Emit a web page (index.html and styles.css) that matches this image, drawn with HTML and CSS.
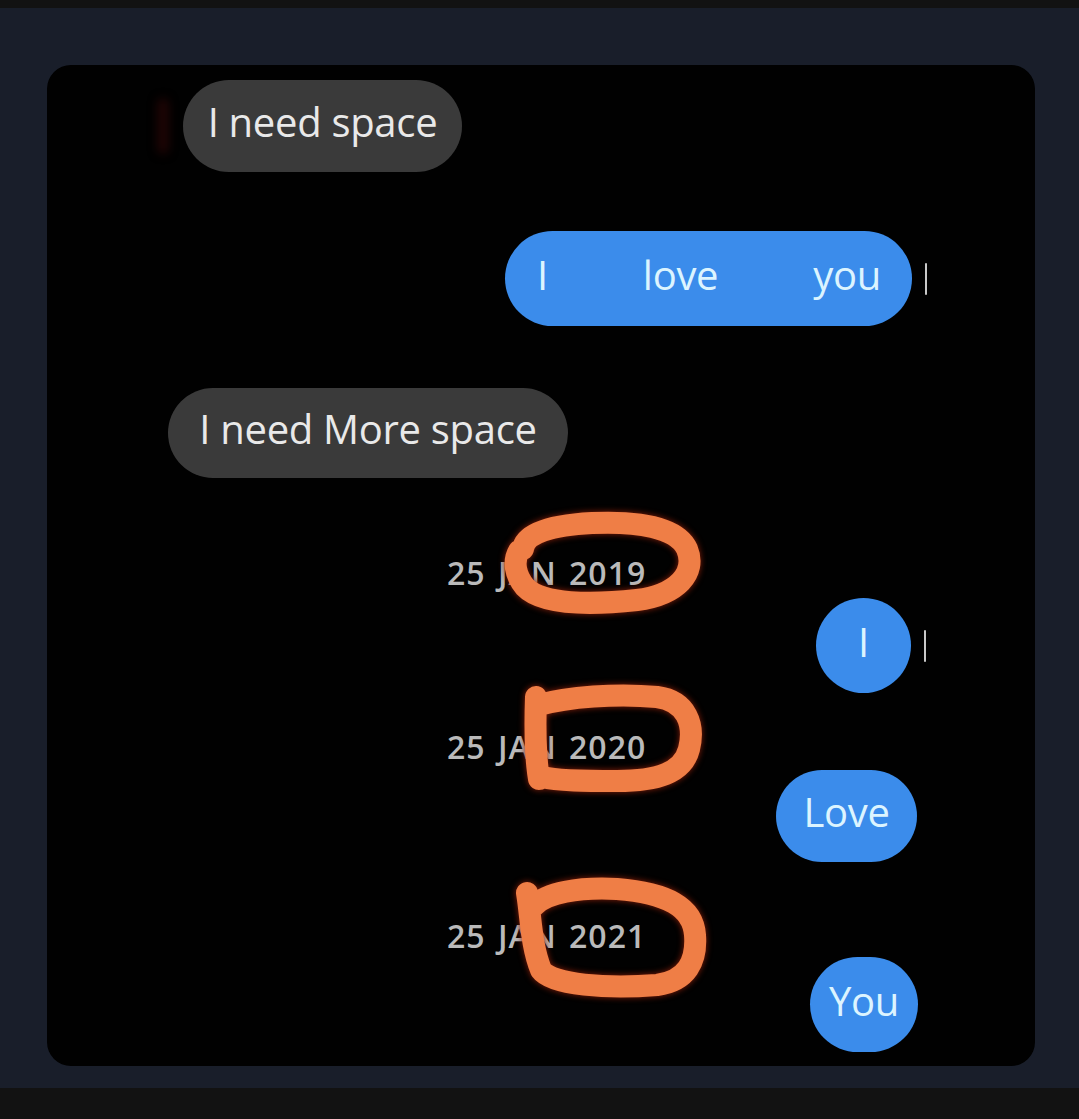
FILE: index.html
```html
<!DOCTYPE html>
<html lang="en">
<head>
<meta charset="utf-8">
<title>I need space</title>
<link rel="stylesheet" href="styles.css">
</head>
<body>
<div class="strip strip-top"></div>
<main class="stage">
  <section class="card">
    <div class="row row-left row-1">
      <span class="ghost"></span>
      <div class="bubble gray">I need space</div>
    </div>
    <div class="row row-right row-2">
      <div class="bubble blue wide"><span>I</span><span>love</span><span>you</span></div>
      <span class="caret"></span>
    </div>
    <div class="row row-left row-3">
      <div class="bubble gray">I need More space</div>
    </div>
    <div class="date date-1">25 JAN 2019</div>
    <div class="row row-right row-4">
      <div class="bubble blue round">I</div>
      <span class="caret"></span>
    </div>
    <div class="date date-2">25 JAN 2020</div>
    <div class="row row-right row-5">
      <div class="bubble blue love">Love</div>
    </div>
    <div class="date date-3">25 JAN 2021</div>
    <div class="row row-right row-6">
      <div class="bubble blue you">You</div>
    </div>
    <svg class="marks" viewBox="0 0 988 1001" aria-hidden="true">
      <g fill="none" stroke="#ef7e46" stroke-width="22" stroke-linecap="round" stroke-linejoin="round">
        <path d="M476,484 C478,468 505,460 545,458 C590,456 630,462 640,484 C650,508 630,530 590,535 C545,540 495,540 478,522 C468,510 466,496 472,486"/>
        <path d="M489,632 C488,660 488,690 492,714 M492,640 C520,632 570,628 610,632 C640,636 648,660 642,684 C636,708 610,716 570,716 C540,716 510,716 496,712"/>
        <path d="M480,828 C484,852 484,880 494,905 C505,920 560,924 610,920 C640,916 650,896 648,870 C646,842 620,828 570,824 C530,822 500,828 488,840"/>
      </g>
    </svg>
  </section>
</main>
<div class="strip strip-bottom"></div>
</body>
</html>
```
FILE: styles.css
```css
html, body {
  margin: 0;
  padding: 0;
}
body {
  width: 1079px;
  height: 1119px;
  overflow: hidden;
  background: #191e2a;
  font-family: "Open Sans", "Noto Sans", "DejaVu Sans", sans-serif;
}
.strip {
  background: #121212;
}
.strip-top {
  height: 8px;
}
.strip-bottom {
  height: 31px;
}
.stage {
  padding: 57px 44px 22px 47px;
}
.card {
  position: relative;
  width: 988px;
  height: 1001px;
  box-sizing: border-box;
  background: #010101;
  border-radius: 24px;
  padding-top: 15px;
  display: flex;
  flex-direction: column;
}
.row {
  display: flex;
  align-items: center;
}
.row-left {
  justify-content: flex-start;
}
.row-right {
  justify-content: flex-end;
}
.bubble {
  display: flex;
  align-items: center;
  justify-content: center;
  box-sizing: border-box;
  font-size: 40px;
  letter-spacing: -0.3px;
  line-height: 1;
  padding-bottom: 8px;
}
.gray {
  background: #3a3a3a;
  color: #e9e9e9;
  border-radius: 46px;
}
.blue {
  background: #3b8ceb;
  color: #dcf4ff;
  border-radius: 48px;
}
.ghost {
  width: 12px;
  height: 56px;
  margin-left: 110px;
  margin-right: 14px;
  border-radius: 6px;
  background: #1e0404;
  filter: blur(5px);
}
.row-1 .gray {
  width: 279px;
  height: 92px;
}
.row-2 {
  margin-top: 59px;
  padding-right: 108px;
}
.wide {
  width: 407px;
  height: 95px;
  justify-content: space-between;
  padding-left: 32px;
  padding-right: 31px;
}
.caret {
  width: 2px;
  height: 32px;
  margin-left: 13px;
  background: #c8c8c8;
  border-radius: 1px;
}
.row-3 {
  margin-top: 62px;
  padding-left: 121px;
}
.row-3 .gray {
  width: 400px;
  height: 90px;
}
.date {
  padding-left: 400px;
  font-size: 32px;
  line-height: 40px;
  height: 40px;
  font-weight: 600;
  letter-spacing: 1px;
  word-spacing: 3px;
  color: #bababa;
}
.date-1 {
  margin-top: 75px;
}
.row-4 {
  margin-top: 5px;
  padding-right: 109px;
}
.round {
  width: 95px;
  height: 95px;
  border-radius: 50%;
}
.date-2 {
  margin-top: 34px;
}
.row-5 {
  margin-top: 3px;
  padding-right: 118px;
}
.love {
  width: 141px;
  height: 92px;
}
.date-3 {
  margin-top: 54px;
}
.row-6 {
  margin-top: 1px;
  padding-right: 117px;
}
.you {
  width: 108px;
  height: 95px;
  border-radius: 48px;
}
.marks {
  position: absolute;
  left: 0;
  top: 0;
  width: 988px;
  height: 1001px;
  pointer-events: none;
  filter: drop-shadow(0 0 3px #8a1f0a);
}
```
